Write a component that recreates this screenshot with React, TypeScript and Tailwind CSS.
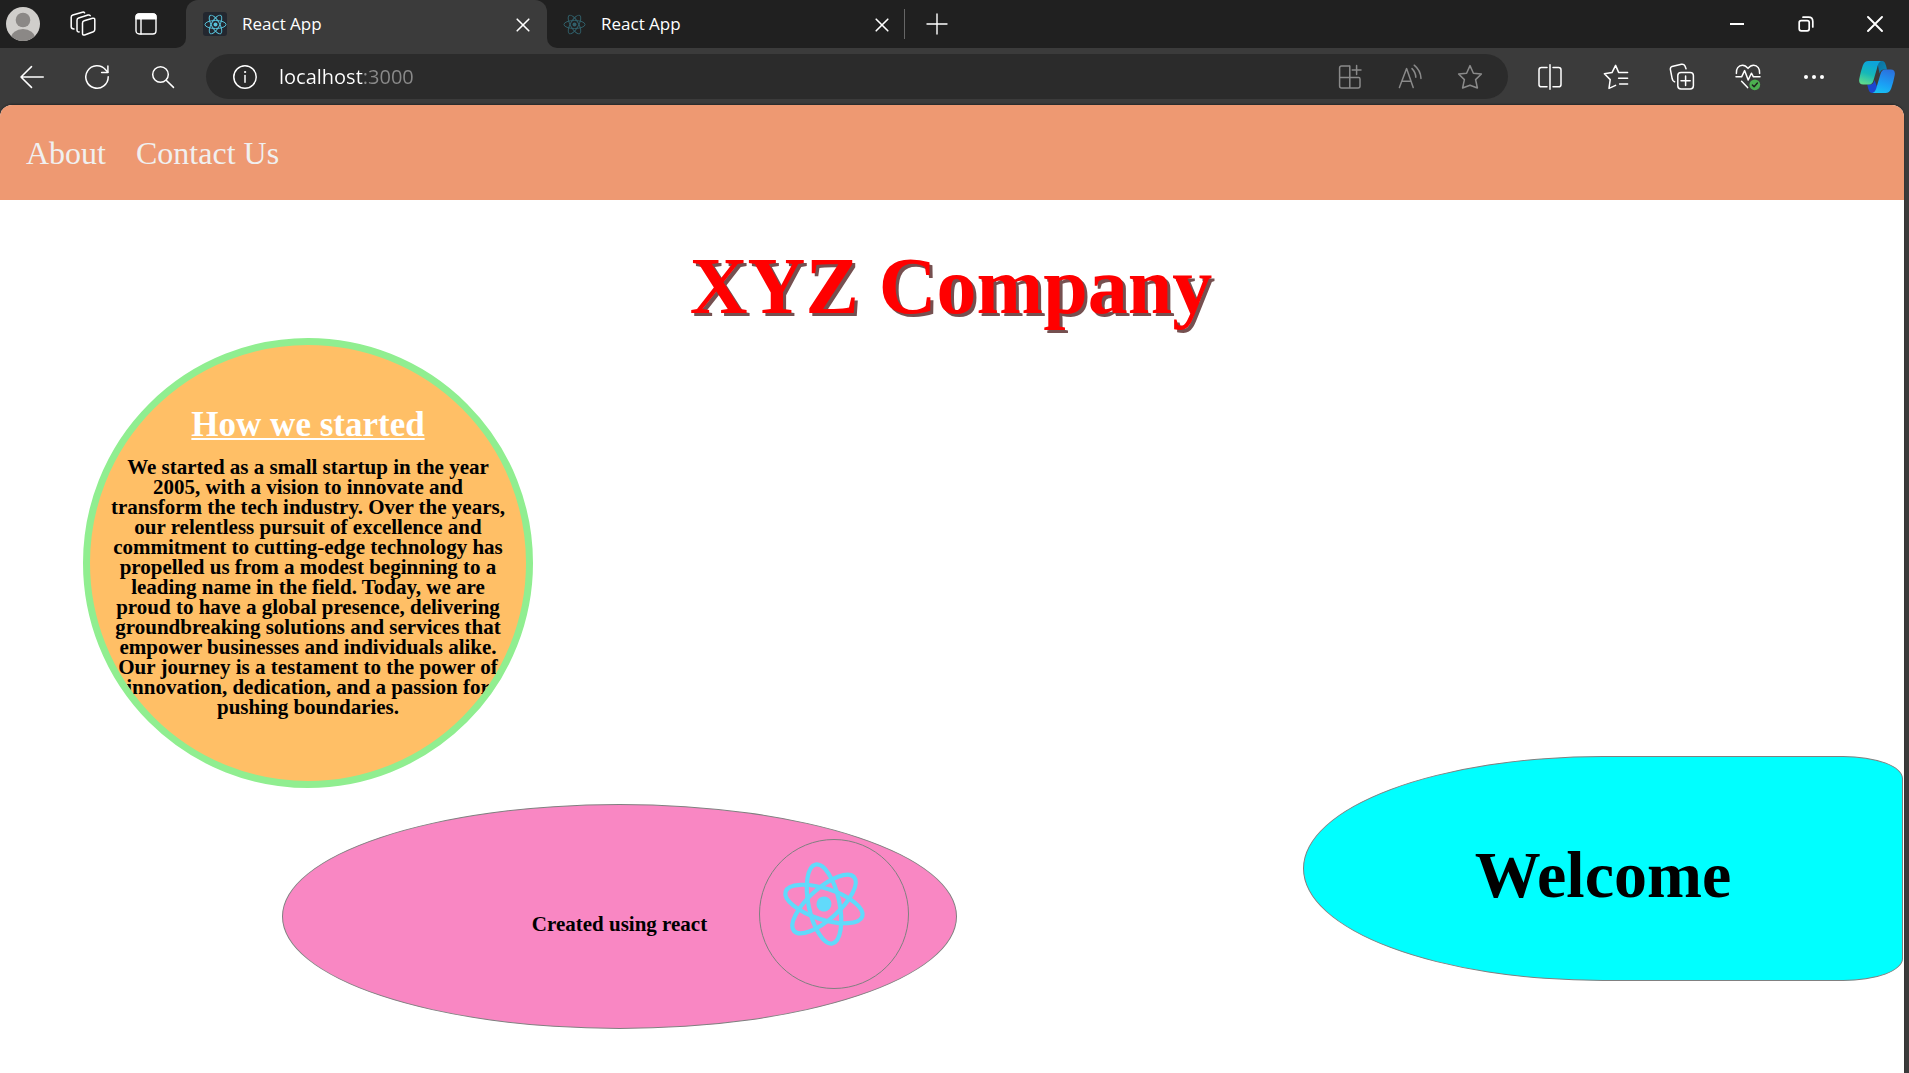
import type { ReactNode } from "react";

const line = {
  fill: "none",
  stroke: "currentColor",
  strokeLinecap: "round",
  strokeLinejoin: "round",
} as const;

function ReactMark({ className, stroke = 1, tilt = 0 }: { className: string; stroke?: number; tilt?: number }) {
  return (
    <svg viewBox="-12 -12 24 24" className={className} aria-hidden="true">
      <g transform={`rotate(${tilt})`} fill="none" stroke="currentColor" strokeWidth={stroke}>
        <circle r="2.05" fill="currentColor" stroke="none" />
        <ellipse rx="11" ry="4.2" />
        <ellipse rx="11" ry="4.2" transform="rotate(60)" />
        <ellipse rx="11" ry="4.2" transform="rotate(120)" />
      </g>
    </svg>
  );
}

function IconButton({ label, className, children }: { label: string; className: string; children: ReactNode }) {
  return (
    <button type="button" aria-label={label} className={`flex h-full shrink-0 items-center justify-center ${className}`}>
      {children}
    </button>
  );
}

function CloseIcon() {
  return (
    <svg viewBox="0 0 14 14" className="mt-px size-3.5" {...line} strokeWidth="1.6">
      <path d="M1.2 1.2 12.8 12.8M12.8 1.2 1.2 12.8" />
    </svg>
  );
}

function TabStrip() {
  return (
    <div className="flex h-12 text-[17px] text-white">
      <div className="flex items-center rounded-br-[10px] bg-[#202020] pr-[9px] pl-1.5">
        <button type="button" aria-label="Profile" className="mr-[11px] size-[34px] shrink-0 overflow-hidden rounded-full">
          <svg viewBox="0 0 34 34" className="size-full">
            <rect width="34" height="34" fill="#d0cecb" />
            <circle cx="17" cy="13" r="7.3" fill="#8b8886" />
            <ellipse cx="17" cy="31.5" rx="12" ry="9.6" fill="#8b8886" />
          </svg>
        </button>
        <IconButton label="Workspaces" className="w-[63px]">
          <svg viewBox="0 0 26 26" className="size-[26px]" {...line} strokeWidth="1.5">
            <path d="M14.2 9.8 22.6 7.2Q24.8 6.8 24.8 9V18.6Q24.8 20.2 23.3 20.8L14.6 24Q12.5 24.4 12.5 22.4V12Q12.5 10.3 14.2 9.8Z" />
            <path d="M9.2 20.9Q7 21 7 19V9.2Q7 7.5 8.6 7L18 4Q19.5 3.6 20.2 4.6" />
            <path d="M4 18Q1.2 18 1.2 15.8V6.2Q1.2 4.5 2.8 4L12.4 1.2Q14 .9 14.6 1.8" />
          </svg>
        </IconButton>
        <IconButton label="Tab actions" className="w-[63px]">
          <svg viewBox="0 0 22 22" className="size-[22px]" {...line} strokeWidth="1.4">
            <rect x="1" y="1" width="20" height="20" rx="3.2" />
            <path d="M1 5.8V4Q1 1 4 1H18Q21 1 21 4V5.8Z" fill="currentColor" />
            <path d="M6 6V21" />
          </svg>
        </IconButton>
      </div>

      <div className="w-[361px] bg-[linear-gradient(#202020_50%,#3b3b3b_50%)]">
        <div className="flex h-full items-center rounded-t-[12px] bg-[#3b3b3b] pl-[17px]">
          <span className="flex size-6 items-center justify-center rounded-[3px] bg-[#23272f] text-[#58c4dc]">
            <ReactMark className="size-[23px]" />
          </span>
          <span className="ml-[15px] flex-1">React App</span>
          <IconButton label="Close tab" className="w-12">
            <CloseIcon />
          </IconButton>
        </div>
      </div>

      <div className="flex flex-1 items-center rounded-bl-[10px] bg-[#202020]">
        <div className="flex h-full w-[357px] items-center pl-[15px]">
          <span className="flex size-6 items-center justify-center text-[#31606b]">
            <ReactMark className="size-[23px]" />
          </span>
          <span className="ml-[15px] flex-1">React App</span>
          <IconButton label="Close tab" className="w-11">
            <CloseIcon />
          </IconButton>
        </div>
        <span className="h-[30px] w-px bg-[#666666]" />
        <IconButton label="New tab" className="w-16">
          <svg viewBox="0 0 22 22" className="size-[22px]" {...line} strokeWidth="1.4">
            <path d="M11 1V21M1 11H21" />
          </svg>
        </IconButton>
        <div className="ml-auto flex h-full">
          <IconButton label="Minimize" className="w-[69px]">
            <svg viewBox="0 0 16 16" className="size-4" {...line} strokeWidth="2">
              <path d="M1 8H15" strokeLinecap="butt" />
            </svg>
          </IconButton>
          <IconButton label="Restore" className="w-[69px]">
            <svg viewBox="0 0 16 16" className="size-4" {...line} strokeWidth="1.7">
              <rect x="1.2" y="4.6" width="10" height="10.2" rx="2" />
              <path d="M5 1.2H10.5Q14.8 1.2 14.8 5.5V11" />
            </svg>
          </IconButton>
          <IconButton label="Close window" className="w-[69px]">
            <svg viewBox="0 0 16 16" className="size-4" {...line} strokeWidth="1.9">
              <path d="M1 1 15 15M15 1 1 15" />
            </svg>
          </IconButton>
        </div>
      </div>
    </div>
  );
}

function CopilotIcon() {
  return (
    <svg viewBox="0 0 36 32" className="h-8 w-9">
      <defs>
        <linearGradient id="ribbonLeft" x1="0.6" y1="0" x2="0.3" y2="1">
          <stop offset="0.1" stopColor="#0da5d9" />
          <stop offset="0.55" stopColor="#16b8b8" />
          <stop offset="1" stopColor="#5fdc8c" />
        </linearGradient>
        <linearGradient id="ribbonRight" x1="0.6" y1="0" x2="0.3" y2="1">
          <stop offset="0" stopColor="#2a72de" />
          <stop offset="0.6" stopColor="#1aa0f5" />
          <stop offset="1" stopColor="#18c0f2" />
        </linearGradient>
        <linearGradient id="foldTop" x1="0" y1="0" x2="1" y2="1">
          <stop offset="0" stopColor="#0d6f9c" />
          <stop offset="1" stopColor="#0b89b8" />
        </linearGradient>
      </defs>
      <path d="M18 0H22.5C25.5 0 26.3 2 27 4.6L28 8.6H25C22.5 8.6 21.5 10 20.6 12.5Z" fill="url(#foldTop)" />
      <path d="M16.5 32H13C10.5 32 9.8 29.8 9.2 27.6L8.2 23.6H11C13.5 23.6 14.7 22 15.6 19L18.4 27Z" fill="#1c46cf" />
      <path d="M9.5 0H22.6C19.6 .6 18.9 4 18 7.2L14.6 19C13.8 21.8 12.8 23.6 10 23.6H4.2C1 23.6-.4 21.6.3 17.8 1.2 13 2.4 8.6 3.8 4.6 5 1.4 6.8 0 9.5 0Z" fill="url(#ribbonLeft)" />
      <path d="M26.5 8.6H31.8C35 8.6 36.4 10.6 35.7 14.2 34.8 19 33.6 23.4 32.2 27.4 31 30.6 29.2 32 26.5 32H13.4C16.4 31.4 17.1 28 18 24.8L21.4 13.2C22.2 10.4 23.6 8.6 26.5 8.6Z" fill="url(#ribbonRight)" />
    </svg>
  );
}

function Toolbar() {
  return (
    <div className="flex h-[57px] items-center text-white">
      <IconButton label="Back" className="w-16">
        <svg viewBox="0 0 24 24" className="size-6" {...line} strokeWidth="1.5">
          <path d="M23.3 12H1M11.5 1.6 1 12 11.5 22.4" />
        </svg>
      </IconButton>
      <IconButton label="Refresh" className="w-[66px]">
        <svg viewBox="0 0 24 24" className="size-6" {...line} strokeWidth="1.5">
          <path d="M23.2 11.8A11.2 11.2 0 1 1 20.6 4.8L22.8 7.3" />
          <path d="M22.9 1V7.4H16.6" />
        </svg>
      </IconButton>
      <IconButton label="Search" className="w-[66px]">
        <svg viewBox="0 0 24 24" className="size-6" {...line} strokeWidth="1.5">
          <circle cx="9.5" cy="9.5" r="7.8" />
          <path d="M15.2 15.2 22.5 22.4" />
        </svg>
      </IconButton>

      <div className="mr-[9px] ml-2.5 flex h-[45px] flex-1 items-center rounded-full bg-[#2b2b2b] pr-2 pl-[27px] text-[#8a8a8a]">
        <button type="button" aria-label="Site information" className="text-white">
          <svg viewBox="0 0 24 24" className="size-6" {...line} strokeWidth="1.5">
            <circle cx="12" cy="12" r="11.2" />
            <path d="M12 10.5V17.2" />
            <circle cx="12" cy="7" r=".6" fill="currentColor" strokeWidth="1" />
          </svg>
        </button>
        <input
          type="text"
          aria-label="Address"
          defaultValue="localhost:3000"
          className="ml-[22px] h-8 min-w-0 flex-1 bg-[linear-gradient(to_right,#ffffff_84px,#8a8a8a_84px)] bg-clip-text text-[20px] text-transparent caret-white outline-none"
        />
        <IconButton label="Install app" className="w-[60px]">
          <svg viewBox="0 0 24 26" className="h-[26px] w-6" {...line} strokeWidth="1.5">
            <path d="M11.5 2H3.6Q1.6 2 1.6 4V22Q1.6 24 3.6 24H20Q22 24 22 22V15Q22 13.6 20.6 13.6H1.6M11.8 2V24" />
            <path d="M18.6 1.5V10.5M14.2 6H23" />
          </svg>
        </IconButton>
        <IconButton label="Read aloud" className="w-[60px]">
          <svg viewBox="0 0 24 26" className="h-[26px] w-6" {...line} strokeWidth="1.5">
            <path d="M1.4 23.5 8.6 4.6 15.2 23.5M3.8 17.2H13" />
            <path d="M14 4.6Q17.6 8.2 17.8 13.2M16.2 1.2Q22.6 6.4 23 14.4" />
          </svg>
        </IconButton>
        <IconButton label="Add to favorites" className="w-[60px]">
          <svg viewBox="0 0 26 26" className="size-[26px]" {...line} strokeWidth="1.5">
            <path d="M13 1.6 16.4 9.2 24.4 10 18.6 15.6 20.4 24 13 21.2 5.6 24 7.4 15.6 1.6 10 9.6 9.2Z" />
          </svg>
        </IconButton>
      </div>

      <IconButton label="Split screen" className="w-[66px]">
        <svg viewBox="0 0 24 26" className="h-[26px] w-6" {...line} strokeWidth="1.5">
          <path d="M9 3.4H3.4Q1 3.4 1 5.8V20.4Q1 22.8 3.4 22.8H9M15 3.4H20.6Q23 3.4 23 5.8V20.4Q23 22.8 20.6 22.8H15M12 .8V25.2" />
        </svg>
      </IconButton>
      <IconButton label="Favorites" className="w-[66px]">
        <svg viewBox="0 0 26 26" className="size-[26px]" {...line} strokeWidth="1.5">
          <path d="M19 8.6 15.6 8.4 12.6 1.4 9 8.6 1.4 9.8 7.2 15.6 6 24.4 12.6 21.4M15.6 14.2H24.6M18 8.6H24.6M16.6 20H24.6" />
        </svg>
      </IconButton>
      <IconButton label="Collections" className="w-[66px]">
        <svg viewBox="0 0 26 28" className="h-7 w-[26px]" {...line} strokeWidth="1.5">
          <rect x="8.8" y="9.4" width="15.6" height="16.6" rx="3.2" />
          <path d="M16.6 13V22.4M12 17.7H21.2M5.6 18.8 4.4 18Q3.6 17.4 3.2 15.8L1.4 6.6Q1 4.4 3 3.4L12.4 1.2Q15 .8 16 3L17 5.8" />
        </svg>
      </IconButton>
      <IconButton label="Browser essentials" className="w-[66px]">
        <svg viewBox="0 0 26 28" className="h-7 w-[26px]" {...line} strokeWidth="1.5">
          <path d="M1.4 10.4C.8 5.8 3.6 2.2 7.4 2.2 9.8 2.2 11.4 3.4 13 5.4 14.6 3.4 16.2 2.2 18.6 2.2 22.4 2.2 25.2 5.8 24.6 10.4" />
          <path d="M1 13.8H6.6L9.6 7.6 13.2 17 16.4 10.2 18.4 13.8H25M6.6 18.2 12.6 24.6" />
          <circle cx="19.8" cy="21.8" r="5.4" fill="#4caf50" stroke="none" />
          <path d="M17.4 22 19.1 23.7 22.4 20" stroke="#202020" />
        </svg>
      </IconButton>
      <IconButton label="Settings and more" className="w-[66px]">
        <svg viewBox="0 0 22 6" className="h-1.5 w-[22px]" fill="currentColor">
          <circle cx="3" cy="3" r="2" />
          <circle cx="11" cy="3" r="2" />
          <circle cx="19" cy="3" r="2" />
        </svg>
      </IconButton>
      <IconButton label="Copilot" className="w-[62px] pr-0.5">
        <CopilotIcon />
      </IconButton>
    </div>
  );
}

function StoryCircle() {
  return (
    <section className="ml-[83px] size-[450px] overflow-hidden rounded-full border-[7px] border-[#90ee90] bg-[#ffbf66] pt-[60px] text-center font-bold">
      <h2 className="text-[35px] leading-10 text-white underline decoration-2 underline-offset-2">How we started</h2>
      <p className="mt-3 text-[21px] leading-5 whitespace-nowrap">
        We started as a small startup in the year
        <br />
        2005, with a vision to innovate and
        <br />
        transform the tech industry. Over the years,
        <br />
        our relentless pursuit of excellence and
        <br />
        commitment to cutting-edge technology has
        <br />
        propelled us from a modest beginning to a
        <br />
        leading name in the field. Today, we are
        <br />
        proud to have a global presence, delivering
        <br />
        groundbreaking solutions and services that
        <br />
        empower businesses and individuals alike.
        <br />
        Our journey is a testament to the power of
        <br />
        innovation, dedication, and a passion for
        <br />
        pushing boundaries.
      </p>
    </section>
  );
}

function Page() {
  return (
    <div className="mr-[5px] flex-1 overflow-hidden rounded-t-[12px] bg-white font-['Liberation_Serif',serif] text-black shadow-[0_-1px_2px_rgba(0,0,0,0.35)]">
      <nav className="flex h-[95px] items-center gap-[30px] bg-[#ee9972] pl-[26px] text-[32px] text-[#f0f0f0]">
        <a href="#about">About</a>
        <a href="#contact">Contact Us</a>
      </nav>
      <main>
        <h1 className="pt-[46px] pr-0.5 pb-3 text-center text-[80px] leading-none font-bold text-[#ff0000] [text-shadow:3px_3px_#755050]">
          XYZ Company
        </h1>
        <div className="flex items-end justify-between">
          <div>
            <StoryCircle />
            <section className="mt-4 ml-[282px] grid h-[225px] w-[675px] grid-cols-[1fr_auto_1fr] rounded-[50%] border border-[#808080] bg-[#f987c3]">
              <p className="col-start-2 self-center pt-3.5 text-[21px] leading-5 font-bold">Created using react</p>
              <div className="mt-[34px] mr-[47px] size-[150px] justify-self-end rounded-full border border-[#808080] p-5 text-[#61dafb]">
                <ReactMark className="size-[88px]" tilt={18} stroke={1.15} />
              </div>
            </section>
          </div>
          <section className="mr-px mb-12 flex h-[225px] w-[600px] items-center justify-center rounded-[50%_10%_10%_50%] border border-[#808080] bg-[#00ffff]">
            <h2 className="pt-3 text-[66px] leading-none font-bold">Welcome</h2>
          </section>
        </div>
      </main>
    </div>
  );
}

export default function App() {
  return (
    <div className="flex min-h-screen flex-col bg-[#3b3b3b] font-['Open_Sans',sans-serif]">
      <header>
        <TabStrip />
        <Toolbar />
      </header>
      <Page />
    </div>
  );
}
